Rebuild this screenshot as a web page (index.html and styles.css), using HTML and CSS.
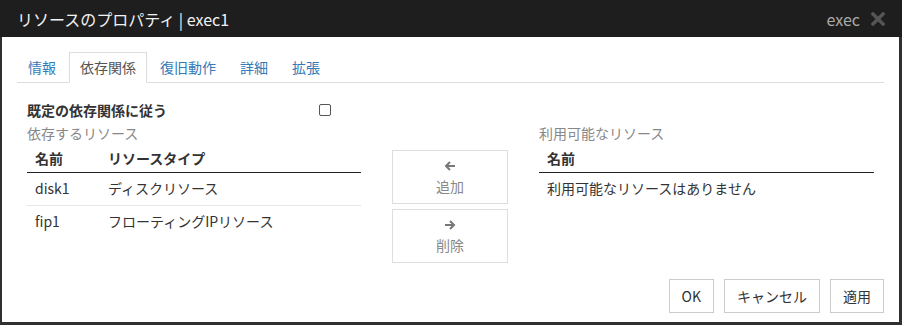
FILE: index.html
```html
<!DOCTYPE html>
<html lang="ja">
<head>
    <meta charset="UTF-8">
    <title>リソースのプロパティ | exec1</title>
    <link rel="stylesheet" href="styles.css">
</head>
<body>
    <div class="dialog">
        <div class="dialog-header">
            <span class="dialog-title">リソースのプロパティ | exec1</span>
            <span class="dialog-tools">
                <span class="dialog-group">exec</span>
                <svg class="close-icon" width="14" height="14" viewBox="0 0 14 14">
                    <path d="M2 2 L12 12 M12 2 L2 12" stroke="#555" stroke-width="3.4" stroke-linecap="square"/>
                </svg>
            </span>
        </div>
        <div class="dialog-body">
            <ul class="nav-tabs">
                <li><a href="#">情報</a></li>
                <li class="active"><a href="#">依存関係</a></li>
                <li><a href="#">復旧動作</a></li>
                <li><a href="#">詳細</a></li>
                <li><a href="#">拡張</a></li>
            </ul>
            <div class="tab-content">
                <div class="check-row">
                    <label class="check-label" for="use-default">既定の依存関係に従う</label>
                    <input type="checkbox" id="use-default" class="check">
                </div>
                <div class="dep-grid">
                    <div class="dep-col">
                        <div class="caption">依存するリソース</div>
                        <table class="res-table">
                            <thead>
                                <tr><th class="col-name">名前</th><th>リソースタイプ</th></tr>
                            </thead>
                            <tbody>
                                <tr><td>disk1</td><td>ディスクリソース</td></tr>
                                <tr><td>fip1</td><td>フローティングIPリソース</td></tr>
                            </tbody>
                        </table>
                    </div>
                    <div class="move-col">
                        <button class="move-btn">
                            <svg width="12" height="12" viewBox="0 0 12 12">
                                <path d="M11 6 H2 M6 2 L2 6 L6 10" fill="none" stroke="#777" stroke-width="2"/>
                            </svg>
                            <span>追加</span>
                        </button>
                        <button class="move-btn">
                            <svg width="12" height="12" viewBox="0 0 12 12">
                                <path d="M1 6 H10 M6 2 L10 6 L6 10" fill="none" stroke="#777" stroke-width="2"/>
                            </svg>
                            <span>削除</span>
                        </button>
                    </div>
                    <div class="dep-col">
                        <div class="caption">利用可能なリソース</div>
                        <table class="res-table">
                            <thead>
                                <tr><th>名前</th></tr>
                            </thead>
                            <tbody>
                                <tr class="empty"><td>利用可能なリソースはありません</td></tr>
                            </tbody>
                        </table>
                    </div>
                </div>
            </div>
            <div class="dialog-footer">
                <button class="btn">OK</button>
                <button class="btn">キャンセル</button>
                <button class="btn">適用</button>
            </div>
        </div>
    </div>
</body>
</html>
```

FILE: styles.css
```css
html, body {
    margin: 0;
    height: 100%;
}

body {
    background: #303030;
    font-family: "Noto Sans CJK JP", "Liberation Sans", sans-serif;
    font-size: 14px;
    color: #333;
}

.dialog {
    display: flex;
    flex-direction: column;
    height: 325px;
}

.dialog-header {
    height: 37px;
    flex: none;
    background: #1e1e1e;
    display: flex;
    align-items: center;
    justify-content: space-between;
    padding: 0 17px;
}

.dialog-title {
    color: #f2f2f2;
    font-size: 16px;
    line-height: 20px;
}

.dialog-tools {
    display: flex;
    align-items: center;
    gap: 11px;
}

.dialog-group {
    color: #aaa;
    font-size: 16px;
    line-height: 20px;
}

.close-icon {
    display: block;
}

.dialog-body {
    flex: 1;
    background: #fff;
    margin: 0 3px 3px 2px;
    padding: 15px 15px 9px;
    display: flex;
    flex-direction: column;
}

.nav-tabs {
    display: flex;
    list-style: none;
    margin: 0;
    padding: 0;
    border-bottom: 1px solid #ddd;
}

.nav-tabs a {
    display: block;
    padding: 5px 10px;
    margin-right: 2px;
    margin-bottom: -1px;
    line-height: 19px;
    border: 1px solid transparent;
    color: #337ab7;
    text-decoration: none;
}

.nav-tabs .active a {
    color: #555;
    background: #fff;
    border-color: #ddd #ddd transparent;
}

.tab-content {
    padding: 0 10px;
}

.check-row {
    display: flex;
    align-items: center;
    margin-top: 17px;
    margin-bottom: 3px;
    line-height: 20px;
}

.check-label {
    width: 292px;
    font-weight: bold;
    color: #333;
}

.check {
    appearance: none;
    width: 12px;
    height: 12px;
    margin: 0;
    border: 1px solid #555;
    border-radius: 2px;
    background: #fff;
}

.dep-grid {
    display: grid;
    grid-template-columns: 334px 116px 335px;
    column-gap: 31px;
}

.caption {
    color: #888;
    line-height: 20px;
}

.res-table {
    width: 100%;
    border-collapse: collapse;
}

.res-table th {
    text-align: left;
    font-weight: bold;
    color: #333;
    padding: 5px 8px 4px;
    line-height: 20px;
    border-bottom: 1px solid #222;
}

.res-table .col-name {
    width: 57px;
}

.res-table td {
    padding: 5px 8px 7px;
    line-height: 20px;
    border-bottom: 1px solid #e6e6e6;
}

.res-table tr:last-child td {
    border-bottom: none;
}

.move-col {
    padding-top: 27px;
    display: flex;
    flex-direction: column;
    gap: 5px;
}

.move-btn {
    height: 54px;
    display: flex;
    flex-direction: column;
    align-items: center;
    justify-content: flex-start;
    padding: 9px 0 0;
    gap: 4px;
    background: #fff;
    border: 1px solid #ddd;
    font-family: inherit;
    font-size: 14px;
    line-height: 20px;
    color: #888;
}

.move-btn svg {
    display: block;
}

.dialog-footer {
    margin-top: auto;
    display: flex;
    justify-content: flex-end;
    gap: 10px;
}

.btn {
    height: 34px;
    padding: 0 12px;
    background: #fff;
    border: 1px solid #ccc;
    font-family: inherit;
    font-size: 14px;
    color: #333;
}
```
